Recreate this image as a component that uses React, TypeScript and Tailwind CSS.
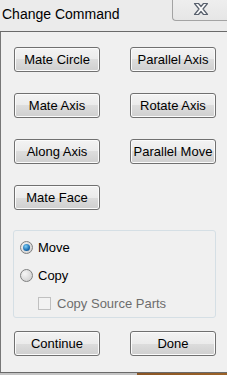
import React from 'react';

const font = { fontFamily: '"Liberation Sans", Arial, sans-serif' };

const Btn: React.FC<{ label: string }> = ({ label }) => (
  <button
    className="w-[86px] h-[25px] rounded-[3px] border border-[#707070] bg-[linear-gradient(#f3f3f3_0%,#ebebeb_50%,#dddddd_50%,#cfcfcf_100%)] shadow-[inset_0_0_0_1px_#fbfbfb] text-[13px] leading-none text-black flex items-center justify-center"
    style={font}
  >
    {label}
  </button>
);

const Radio: React.FC<{ checked?: boolean; label: string }> = ({ checked, label }) => (
  <div className="flex items-center h-[13px] gap-[5px]">
    <span className="w-[13px] h-[13px] rounded-full border border-[#7f8080] bg-[radial-gradient(circle_at_35%_35%,#f6f6f6,#c8c8c8)] flex items-center justify-center">
      {checked && (
        <span className="w-[7px] h-[7px] rounded-full bg-[radial-gradient(circle_at_40%_35%,#7fd0f7,#1a6cb0_60%,#0b3e70)]" />
      )}
    </span>
    <span className="text-[13px] leading-none text-black">{label}</span>
  </div>
);

export default function App() {
  return (
    <div className="w-[227px] h-[375px] bg-[#f0f0f0] flex flex-col overflow-hidden" style={font}>
      {/* title bar */}
      <div className="relative h-[31px] bg-[#ebebeb] flex items-center pl-[2px] pb-[3px]">
        <span className="text-[14px] text-black">Change Command</span>
        <div className="absolute left-[172px] top-0 w-[56px] h-[21px] rounded-bl-[4px] border-l border-b border-[#a3a3a3] bg-[linear-gradient(#eeeeee,#e6e6e6)] flex items-center justify-center pb-[3px]">
          <svg width="16" height="14" viewBox="0 0 16 14">
            <path
              d="M1.5 1.5h4l2.5 3 2.5-3h4l-4.5 5.5 4.5 5.5h-4l-2.5-3-2.5 3h-4l4.5-5.5z"
              fill="#fafafa"
              stroke="#59616e"
              strokeWidth="1.2"
              strokeLinejoin="round"
            />
          </svg>
        </div>
      </div>
      <div className="h-px bg-[#6a6a6a]" />

      {/* body */}
      <div className="flex-1 border-l border-[#777777] pl-[13px] pt-[15px] flex flex-col">
        <div className="grid grid-cols-[86px_86px] gap-x-[30px] gap-y-[21px]">
          <Btn label="Mate Circle" />
          <Btn label="Parallel Axis" />
          <Btn label="Mate Axis" />
          <Btn label="Rotate Axis" />
          <Btn label="Along Axis" />
          <Btn label="Parallel Move" />
          <Btn label="Mate Face" />
        </div>

        <div className="mt-[20px] -ml-px w-[203px] h-[88px] rounded-[3px] border border-[#d5dfe5] pl-[6px] pt-[10px] flex flex-col gap-[15px]">
          <Radio checked label="Move" />
          <Radio label="Copy" />
          <div className="flex items-center h-[13px] gap-[6px] pl-[18px]">
            <span className="w-[13px] h-[13px] border border-[#c0c0c0] bg-[#f2f2f2]" />
            <span className="text-[13px] leading-none text-[#6d6d6d]">Copy Source Parts</span>
          </div>
        </div>

        <div className="mt-[13px] flex gap-[30px]">
          <Btn label="Continue" />
          <Btn label="Done" />
        </div>
      </div>

      <div className="h-px bg-[#6a6a6a]" />
      <div className="h-[2px] flex">
        <div className="w-[137px] bg-[#c4c4c4]" />
        <div className="flex-1 bg-[linear-gradient(90deg,#8a5524,#9b6228)]" />
      </div>
    </div>
  );
}
